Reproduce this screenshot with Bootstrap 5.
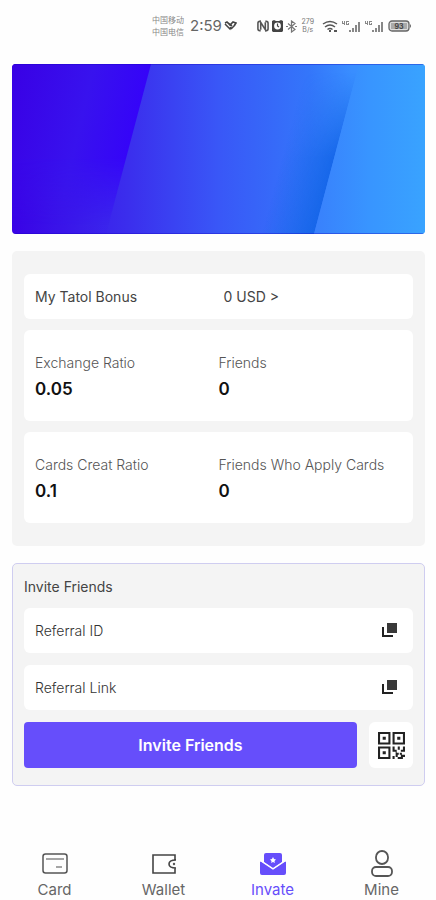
<!DOCTYPE html>
<html lang="en">
<head>
<meta charset="utf-8">
<meta name="viewport" content="width=device-width, initial-scale=1">
<title>Invite Friends</title>
<link href="https://cdn.jsdelivr.net/npm/bootstrap@5.3.0/dist/css/bootstrap.min.css" rel="stylesheet">
<style>
body { font-family: Inter, "Noto Sans CJK SC", sans-serif; font-size: 14px; line-height: 20px; color: #444; background: #fefefe; }
.status { height: 52px; padding: 0 24px 0 152px; color: #666; }
.carrier { font-size: 8px; line-height: 12px; color: #888; }
.speed { font-size: 7px; line-height: 8px; color: #777; }
.clock { font-size: 15px; }
.pair { gap: 2px; }
main { padding: 12px 11px 0 12px; }
.banner { height: 170px; border-radius: 4px; }
.panel { background: #f4f4f4; border-radius: 5px; margin-top: 17px; padding: 23px 12px; }
.stack { gap: 11px; }
.tile { background: #fff; border-radius: 6px; padding: 0 11px; }
.bonus { height: 45px; }
.bonus .amount { padding-left: 5px; }
.stat { padding: 22px 11px 17px; }
.stat dt { line-height: 22px; font-weight: 300; color: #555; }
.stat dd { font-size: 17px; line-height: 30px; font-weight: 600; color: #111; }
.invite { border: 1px solid #cfcdf0; padding: 12px 11px 17px; }
.invite h2 { font-size: 14px; line-height: 22px; font-weight: 400; margin-bottom: 10px; }
.form-stack { gap: 12px; }
.field { height: 45px; }
.field input { font-size: 14px; font-weight: 300; color: #333; }
.field input::placeholder { color: #333; opacity: 1; }
.go { height: 46px; background: #664efb; border-radius: 4px; font-size: 16px; font-weight: 600; color: #fff; }
.go:hover { background: #563ef0; color: #fff; }
.qr { width: 44px; height: 46px; background: #fff; border-radius: 6px; }
.tabs { height: 57px; font-size: 15px; }
.tabs a { color: #666; gap: 3px; padding-top: 6px; }
.tabs a.current { color: #664efb; }
svg { display: block; }
</style>
<script src="https://cdn.jsdelivr.net/npm/bootstrap@5.3.0/dist/js/bootstrap.bundle.min.js"></script>
</head>
<body class="min-vh-100 d-flex flex-column">
<header class="status d-flex align-items-center justify-content-between">
  <div class="d-flex align-items-center pair">
    <div class="carrier">中国移动<br>中国电信</div>
    <div class="clock ps-1">2:59</div>
    <svg width="13" height="10" viewBox="0 0 13 10" fill="none" stroke="#444" stroke-width="1.6"><path d="M1 2l2-1 3 3 3-3 3 1-2 3M1 3l5 5 1-2M4 2l4 3M7 8l4-4"/></svg>
  </div>
  <div class="d-flex align-items-center gap-1">
    <div class="d-flex align-items-center pair">
      <svg width="12" height="12" viewBox="0 0 13 12" fill="none" stroke="#555" stroke-width="1.7"><path d="M4 1H3Q1 1 1 3v6q0 2 2 2h1M9 1h1q2 0 2 2v6q0 2-2 2H9"/><path d="M4 10V2l5 8V2"/></svg>
      <svg width="13" height="12" viewBox="0 0 13 12"><path d="M1 1l2-1 2 1h3l2-1 2 1v10l-1 1H2L1 11z" fill="#444"/><circle cx="6.500" cy="6" r="3.400" fill="#fff"/><path d="M6.500 3.500V6L8 7" stroke="#444" stroke-width="1.200" fill="none"/></svg>
      <svg width="11" height="13" viewBox="0 0 11 13" fill="none" stroke="#777" stroke-width="1.200"><path d="M2 3.500l7 6-3.500 2.500V1L9 3.500l-7 6M0 6.500h2M9 6.500h2"/></svg>
    </div>
    <div class="speed text-center">279<br>B/s</div>
    <svg class="ms-1" width="16" height="13" viewBox="0 0 16 13" fill="none" stroke="#555" stroke-width="1.500"><path d="M1 4q7-5 14 0M3 7q5-4 10 0M5.500 9.500q2.500-2 5 0"/><path d="M7 11h2M12 11h3" stroke-width="2"/></svg>
    <svg width="19" height="13" viewBox="0 0 19 13" fill="#888"><path d="M0 1h1v2h1V1h1v4H2V4H0zM4 1h3v1H5v2h1V3h1v2H4zM7 10h2v2H7zM10 8h2v4h-2zM13 5h2v7h-2zM16 2h2v10h-2z"/></svg>
    <svg width="19" height="13" viewBox="0 0 19 13" fill="#888"><path d="M0 1h1v2h1V1h1v4H2V4H0zM4 1h3v1H5v2h1V3h1v2H4zM7 10h2v2H7zM10 8h2v4h-2zM13 5h2v7h-2zM16 2h2v10h-2z"/></svg>
    <svg width="24" height="12" viewBox="0 0 24 12"><rect x="1" y="1" width="20" height="10" rx="3" fill="#ddd" stroke="#666" stroke-width="1.300"/><rect x="3" y="3" width="16" height="6" fill="#aaa"/><path d="M22 4q2 2 0 4" fill="#666"/><text x="11" y="9" text-anchor="middle" font-size="7" font-weight="700" fill="#444">93</text></svg>
  </div>
</header>

<main class="flex-grow-1">
  <svg class="banner w-100" viewBox="0 0 413 170" preserveAspectRatio="none" aria-hidden="true">
    <defs>
      <linearGradient id="base"><stop offset="0" stop-color="#3902e6"/><stop offset=".28" stop-color="#3b2eed"/><stop offset=".5" stop-color="#3957f7"/><stop offset=".72" stop-color="#3476fa"/><stop offset=".82" stop-color="#398dff"/><stop offset="1" stop-color="#39a3ff"/></linearGradient>
      <linearGradient id="left" gradientUnits="userSpaceOnUse" x1="0" y1="0" x2="130" y2="30"><stop offset="0" stop-color="#3900e5"/><stop offset=".6" stop-color="#3812ee"/><stop offset="1" stop-color="#3504f8"/></linearGradient>
      <linearGradient id="leftfade" x2="0" y2="1"><stop offset=".55" stop-color="#fff"/><stop offset=".95" stop-color="#fff" stop-opacity=".05"/></linearGradient>
      <mask id="leftmask"><rect width="413" height="170" fill="url(#leftfade)"/></mask>
      <linearGradient id="shade" gradientUnits="userSpaceOnUse" x1="270" y1="95" x2="326" y2="110"><stop offset="0" stop-color="#1263e6" stop-opacity="0"/><stop offset="1" stop-color="#1263e6"/></linearGradient>
      <linearGradient id="shadefade" x2="0" y2="1"><stop offset=".05" stop-color="#fff" stop-opacity="0"/><stop offset=".55" stop-color="#fff"/></linearGradient>
      <mask id="shademask"><rect width="413" height="170" fill="url(#shadefade)"/></mask>
      <linearGradient id="right" gradientUnits="userSpaceOnUse" x1="302" y1="0" x2="413" y2="0"><stop offset="0" stop-color="#3980fc"/><stop offset=".5" stop-color="#3895ff"/><stop offset="1" stop-color="#39a3ff"/></linearGradient>
    </defs>
    <rect width="413" height="170" fill="url(#base)"/>
    <path d="M0 0H139L94 170H0z" fill="url(#left)" mask="url(#leftmask)"/>
    <path d="M250 0H347L302 170H220z" fill="url(#shade)" mask="url(#shademask)"/>
    <path d="M347 0H413V170H302z" fill="url(#right)"/>
    <path d="M0 169.500H413M0 .5H413" stroke="#1400bd" stroke-opacity=".35"/>
  </svg>

  <section class="panel stack d-grid">
    <div class="tile bonus row g-0 align-items-center">
      <div class="col-6">My Tatol Bonus</div>
      <a class="col-6 amount text-reset text-decoration-none" href="#">0 USD &gt;</a>
    </div>
    <dl class="tile stat row g-0 mb-0">
      <div class="col-6"><dt>Exchange Ratio</dt><dd class="mb-0">0.05</dd></div>
      <div class="col-6"><dt>Friends</dt><dd class="mb-0">0</dd></div>
    </dl>
    <dl class="tile stat row g-0 mb-0">
      <div class="col-6"><dt>Cards Creat Ratio</dt><dd class="mb-0">0.1</dd></div>
      <div class="col-6 text-nowrap"><dt>Friends Who Apply Cards</dt><dd class="mb-0">0</dd></div>
    </dl>
  </section>

  <section class="panel invite">
    <h2>Invite Friends</h2>
    <div class="form-stack d-flex flex-column">
      <div class="tile field d-flex align-items-center">
        <input class="form-control-plaintext p-0" type="text" placeholder="Referral ID" aria-label="Referral ID" readonly>
        <button class="btn p-1" type="button" aria-label="Copy referral ID"><svg width="15" height="15" viewBox="0 0 15 15"><path d="M5 0h10v10H5z" fill="#393939"/><path d="M1 4v9h10" fill="none" stroke="#222" stroke-width="2"/></svg></button>
      </div>
      <div class="tile field d-flex align-items-center">
        <input class="form-control-plaintext p-0" type="text" placeholder="Referral Link" aria-label="Referral Link" readonly>
        <button class="btn p-1" type="button" aria-label="Copy referral link"><svg width="15" height="15" viewBox="0 0 15 15"><path d="M5 0h10v10H5z" fill="#393939"/><path d="M1 4v9h10" fill="none" stroke="#222" stroke-width="2"/></svg></button>
      </div>
      <div class="form-stack d-flex">
        <button class="btn go flex-grow-1 border-0 p-0" type="button">Invite Friends</button>
        <button class="btn qr border-0 p-0 d-flex align-items-center justify-content-center" type="button" aria-label="Show QR code">
          <svg width="27" height="27" viewBox="0 0 26 26" fill="#222"><path fill-rule="evenodd" d="M0 0h12v12H0zM2 2v8h8V2zM14 0h12v12H14zM16 2v8h8V2zM0 14h12v12H0zM2 16v8h8v-8z"/><path d="M4.500 4.500h3v3h-3zM18.500 4.500h3v3h-3zM4.500 18.500h3v3h-3zM14 14h2v3h2v3h2v2h-3v-3h-3zM19 14h2v3h-2zM24 14h2v5h-4v-2h2zM14 23h2v3h-2zM17 22h2v2h-2zM21 20h2v2h3v2h-2v2h-5v-2h3v-2h-1z"/></svg>
        </button>
      </div>
    </div>
  </section>
</main>

<nav class="tabs d-flex text-center" aria-label="Main">
  <a class="col-3 d-flex flex-column align-items-center text-decoration-none" href="#"><svg width="26" height="28" viewBox="0 0 26 28" fill="none" stroke="#555" stroke-width="1.500"><rect x="1" y="5" width="24" height="19" rx="2.500"/><path d="M4 10h18M14 18h6" stroke="#888"/></svg>Card</a>
  <a class="col-3 d-flex flex-column align-items-center text-decoration-none" href="#"><svg width="26" height="28" viewBox="0 0 26 28" fill="none" stroke="#444" stroke-width="1.600"><path d="M24 11V6H2v18h22v-5M25 11q-7 0-7 4t7 4"/><circle cx="23" cy="15" r=".4"/></svg>Wallet</a>
  <a class="col-3 current d-flex flex-column align-items-center text-decoration-none" href="#" aria-current="page"><svg width="26" height="28" viewBox="0 0 26 28" fill="#664efb"><path d="M6 4h14q2 0 2 2v7l-9 6-9-6V6q0-2 2-2z"/><path d="M0 13q1-1 2 0l11 7 11-7q1-1 2 0v11q0 2-2 2H2q-2 0-2-2z"/><path d="M1 12l12 8 12-8" fill="none" stroke="#fff" stroke-width="1.200"/><path d="M13 8l1 2 2 .5-1.500 1.500.3 2-1.800-1-1.800 1 .3-2L10 10.500l2-.5z" fill="#fff"/></svg>Invate</a>
  <a class="col-3 d-flex flex-column align-items-center text-decoration-none" href="#"><svg width="26" height="28" viewBox="0 0 26 28" fill="none" stroke="#555" stroke-width="1.800"><rect x="7" y="2" width="12" height="13" rx="6"/><rect x="3" y="18" width="20" height="9" rx="4"/></svg>Mine</a>
</nav>
</body>
</html>
